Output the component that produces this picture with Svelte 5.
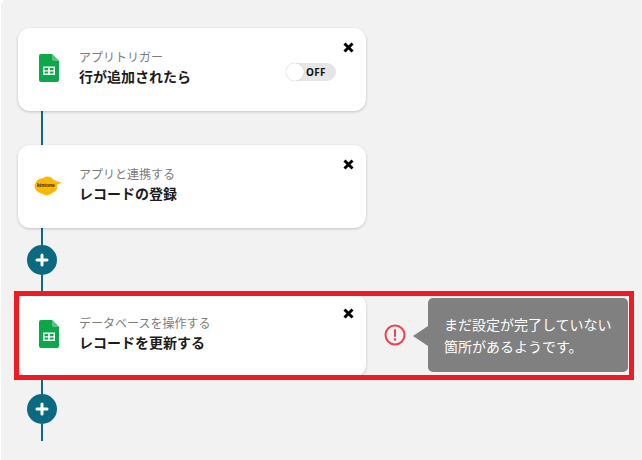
<script>
  const steps = [
    { id: 1, icon: 'sheets', label: 'アプリトリガー', title: '行が追加されたら', toggle: true },
    { id: 2, icon: 'kintone', label: 'アプリと連携する', title: 'レコードの登録', plus: true },
    { id: 3, icon: 'sheets', label: 'データベースを操作する', title: 'レコードを更新する', error: true, plus: true, last: true }
  ];
</script>

<main class="page">
  <div class="flow">
    {#each steps as s (s.id)}
      <div class="row">
        <section class="card">
          <div class="icon">
            {#if s.icon === 'sheets'}
              <svg class="sheet" width="20" height="28" viewBox="0 0 20 28">
                <path d="M2 0H13L20 7V26a2 2 0 0 1-2 2H2a2 2 0 0 1-2-2V2a2 2 0 0 1 2-2Z" fill="#0ba84a"/>
                <path d="M13 0L20 7H15a2 2 0 0 1-2-2Z" fill="#5fbf83"/>
                <path d="M4 12.500h12v8.500H4Z M5.500 14v2.200h3.700V14Z M10.800 14v2.200h3.700V14Z M5.500 17.600v2h3.700v-2Z M10.800 17.600v2h3.700v-2Z" fill="#fff" fill-rule="evenodd"/>
              </svg>
            {:else}
              <div class="kintone">
                <svg width="28" height="20" viewBox="0 0 28 20">
                  <path d="M2 6C4 2 8 3 10 1.500C13 -.5 17 .5 19 3C21 5 23 5 28 7C24 8 23 8.500 23 10C24 14 20 16 18 17C15 20 11 20 9 18C6 17.500 2 15.500 1 12C0 10 1 8 2 6Z" fill="#fdb707"/>
                </svg>
                <span class="kintone-name">kintone</span>
              </div>
            {/if}
          </div>
          <div class="text">
            <div class="label">{s.label}</div>
            <div class="title">{s.title}</div>
          </div>
          {#if s.toggle}
            <div class="toggle"><span class="knob"></span><span class="off">OFF</span></div>
          {/if}
          <svg class="close" width="11" height="11" viewBox="0 0 11 11">
            <path d="M1.500 1.500L9.500 9.500M9.500 1.500L1.500 9.500" stroke="#000" stroke-width="3"/>
          </svg>
        </section>
        {#if s.error}
          <svg class="alert" width="22" height="22" viewBox="0 0 22 22">
            <circle cx="11" cy="11" r="9.500" fill="none" stroke="#f0414f" stroke-width="2"/>
            <path d="M11 6V12" stroke="#f0414f" stroke-width="2" stroke-linecap="round"/>
            <circle cx="11" cy="15.500" r="1.200" fill="#f0414f"/>
          </svg>
          <div class="tooltip">まだ設定が完了していない<br />箇所があるようです。</div>
        {/if}
      </div>
      {#if s.plus}
        <div class="line short"></div>
        <div class="plus">
          <svg width="14" height="14" viewBox="0 0 14 14">
            <path d="M7 2V12M2 7H12" stroke="#fff" stroke-width="3" stroke-linecap="round"/>
          </svg>
        </div>
        <div class="line" class:tail={s.last} class:mid={!s.last}></div>
      {:else}
        <div class="line long"></div>
      {/if}
    {/each}
  </div>
  <div class="frame"></div>
</main>

<style>
  :global(body) {
    margin: 0;
    background: #fff;
  }
  .page {
    position: relative;
    box-sizing: border-box;
    height: 460px;
    width: 641px;
    margin-left: 1px;
    background: #f2f2f3;
    border-top-left-radius: 5px;
    padding: 28px 0 0 17px;
    overflow: hidden;
    font-family: "Noto Sans CJK JP", "Noto Sans", sans-serif;
  }
  .flow {
    display: flex;
    flex-direction: column;
  }
  .row {
    display: flex;
    align-items: center;
  }
  .card {
    position: relative;
    box-sizing: border-box;
    width: 348px;
    height: 83px;
    display: flex;
    align-items: center;
    background: #fff;
    border-radius: 12px;
    box-shadow: 0 1px 3px rgba(0, 0, 0, 0.2);
  }
  .icon {
    width: 62px;
    display: flex;
    justify-content: center;
  }
  .sheet {
    display: block;
    margin-top: -3px;
  }
  .kintone {
    position: relative;
    width: 28px;
    height: 20px;
    margin-left: -2px;
    margin-top: -2px;
  }
  .kintone svg {
    display: block;
  }
  .kintone-name {
    position: absolute;
    left: 3px;
    top: 5px;
    font: bold 5px/9px "Liberation Sans", sans-serif;
    color: #2a1e00;
  }
  .text {
    flex: 1;
    display: flex;
    flex-direction: column;
    gap: 2px;
    padding-bottom: 5px;
    margin-left: -1px;
  }
  .label {
    font-size: 12px;
    line-height: 16px;
    color: #7c7c7c;
  }
  .title {
    font-size: 14px;
    line-height: 19px;
    font-weight: 700;
    color: #1c1c1c;
  }
  .toggle {
    position: absolute;
    left: 268px;
    top: 35px;
    width: 50px;
    height: 18px;
    display: flex;
    align-items: center;
    border-radius: 9px;
    background: #e6e6e6;
  }
  .knob {
    width: 18px;
    height: 18px;
    border-radius: 50%;
    background: #fff;
    box-shadow: 0 0 1px rgba(0, 0, 0, 0.3);
  }
  .off {
    margin-left: 2px;
    font: bold 10px/18px "Noto Sans", sans-serif;
    color: #111;
    letter-spacing: 0.3px;
  }
  .close {
    position: absolute;
    right: 12px;
    top: 14px;
  }
  .alert {
    margin-left: 18px;
    margin-top: -1px;
    flex: none;
  }
  .tooltip {
    position: relative;
    box-sizing: border-box;
    width: 200px;
    height: 74px;
    margin-left: 22px;
    margin-top: -1px;
    padding: 15px 0 0 16px;
    border-radius: 5px;
    background: #808080;
    color: #fff;
    font-size: 14px;
    line-height: 22px;
  }
  .tooltip::before {
    content: "";
    position: absolute;
    left: -15px;
    top: 28px;
    border-style: solid;
    border-width: 10px 15px 10px 0;
    border-color: transparent #808080 transparent transparent;
  }
  .line {
    width: 2px;
    margin-left: 23px;
    background: #0b6a82;
  }
  .long { height: 34px; }
  .short { height: 17px; }
  .mid { height: 19px; }
  .tail { height: 17px; }
  .plus {
    width: 30px;
    height: 30px;
    margin-left: 9px;
    border-radius: 50%;
    background: #0b6a82;
    display: flex;
    align-items: center;
    justify-content: center;
  }
  .frame {
    position: absolute;
    left: 13px;
    top: 291px;
    width: 620px;
    height: 89px;
    box-sizing: border-box;
    border: 5px solid #ed1c24;
    pointer-events: none;
  }
</style>
